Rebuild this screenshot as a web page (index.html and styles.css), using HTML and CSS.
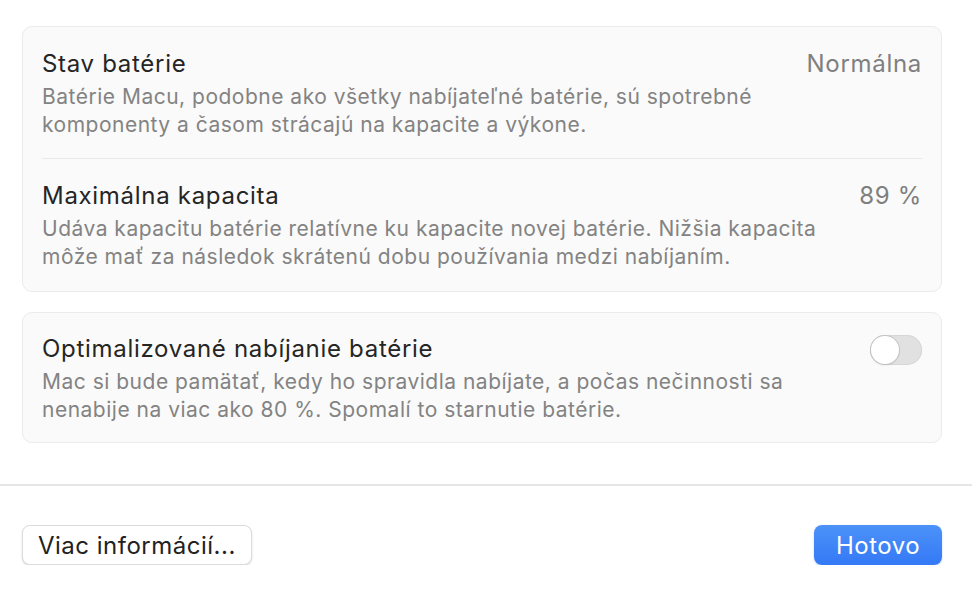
FILE: index.html
```html
<!DOCTYPE html>
<html lang="sk">
<head>
  <meta charset="UTF-8">
  <meta name="viewport" content="width=device-width, initial-scale=1.0">
  <title>Stav batérie</title>
  <link rel="stylesheet" href="styles.css">
</head>
<body>
  <div class="sheet">
    <div class="card">
      <div class="row">
        <div class="row-text">
          <h2>Stav batérie</h2>
          <p>Batérie Macu, podobne ako všetky nabíjateľné batérie, sú spotrebné komponenty a časom strácajú na kapacite a výkone.</p>
        </div>
        <span class="value">Normálna</span>
      </div>
      <div class="row">
        <div class="row-text">
          <h2>Maximálna kapacita</h2>
          <p>Udáva kapacitu batérie relatívne ku kapacite novej batérie. Nižšia kapacita môže mať za následok skrátenú dobu používania medzi nabíjaním.</p>
        </div>
        <span class="value">89 %</span>
      </div>
    </div>

    <div class="card card-single">
      <div class="row">
        <div class="row-text">
          <h2>Optimalizované nabíjanie batérie</h2>
          <p>Mac si bude pamätať, kedy ho spravidla nabíjate, a počas nečinnosti sa nenabije na viac ako 80 %. Spomalí to starnutie batérie.</p>
        </div>
        <button class="toggle" aria-label="Optimalizované nabíjanie batérie"><span class="knob"></span></button>
      </div>
    </div>
  </div>

  <div class="footer">
    <button class="btn">Viac informácií...</button>
    <button class="btn btn-primary">Hotovo</button>
  </div>
</body>
</html>
```

FILE: styles.css
```css
* {
  margin: 0;
  padding: 0;
  box-sizing: border-box;
}
body {
  font-family: Inter, "Noto Sans", sans-serif;
  background: #fff;
  color: #252525;
}
.sheet {
  padding: 26px 30px 0 22px;
}
.card {
  background: #fafafa;
  border: 1px solid #ebebeb;
  border-radius: 10px;
  padding: 0 19px;
}
.card-single {
  margin-top: 20px;
}
.row {
  display: flex;
  justify-content: space-between;
  align-items: flex-start;
  gap: 30px;
  padding: 23px 0 19px;
}
.row + .row {
  border-top: 1px solid #e8e8e8;
  padding-bottom: 20px;
}
.card-single .row {
  padding: 22px 0 18px;
}
.row-text {
  max-width: 790px;
}
h2 {
  font-size: 24px;
  font-weight: 400;
  letter-spacing: 0.7px;
  line-height: 28px;
  margin-bottom: 5px;
  color: #252525;
}
p {
  font-size: 21px;
  letter-spacing: 0.5px;
  line-height: 28px;
  color: #838383;
}
.value {
  font-size: 24px;
  letter-spacing: 0.7px;
  line-height: 28px;
  color: #7f7f7f;
  white-space: nowrap;
}
.toggle {
  flex: none;
  width: 52px;
  height: 30px;
  border: none;
  border-radius: 15px;
  background: #e1e1e1;
  box-shadow: inset 0 0 0 1px #d6d6d6;
  padding: 1px;
  display: flex;
  align-items: center;
}
.knob {
  width: 28px;
  height: 28px;
  border-radius: 50%;
  background: #fff;
  box-shadow: 0 0 0 1px #c4c4c4, 0 1px 2px rgba(0, 0, 0, 0.15);
}
.footer {
  margin-top: 41px;
  border-top: 2px solid #e6e6e6;
  padding: 39px 30px 0 22px;
  display: flex;
  justify-content: space-between;
}
.btn {
  font-family: Inter, "Noto Sans", sans-serif;
  font-size: 24px;
  letter-spacing: 0.5px;
  height: 40px;
  padding: 0 15px;
  border-radius: 8px;
  border: 1px solid #dcdcdc;
  background: #fff;
  color: #222;
  box-shadow: 0 1px 2px rgba(0, 0, 0, 0.15);
}
.btn-primary {
  width: 128px;
  border: none;
  color: #fff;
  background: linear-gradient(#4c92f8, #3479f6);
  box-shadow: 0 1px 2px rgba(30, 90, 220, 0.3);
}
```
